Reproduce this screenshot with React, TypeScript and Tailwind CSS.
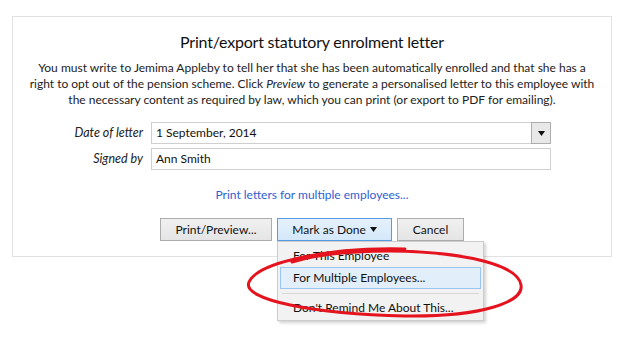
import React from "react";

export default function App() {
  const font = { fontFamily: "Lato, 'Noto Sans', 'Liberation Sans', sans-serif" };
  return (
    <div className="relative w-[628px] h-[344px] bg-white overflow-hidden text-[#1f1f1f]" style={font}>
      <div className="pt-[16px] pl-[12px]">
        <div className="w-[600px] h-[241px] border border-[#e1e1e1] bg-white flex flex-col items-center pt-[14px]">
          <div className="text-[16px] leading-[22px] tracking-[-0.2px] text-[#111]">Print/export statutory enrolment letter</div>
          <p className="mt-[7px] text-[12px] leading-[16px] text-center whitespace-nowrap text-[#222]">
            You must write to Jemima Appleby to tell her that she has been automatically enrolled and that she has a
            <br />
            right to opt out of the pension scheme. Click <i>Preview</i> to generate a personalised letter to this employee with
            <br />
            the necessary content as required by law, which you can print (or export to PDF for emailing).
          </p>
          <div className="mt-[14px] self-start grid grid-cols-[130px_400px] gap-x-[8px] gap-y-[4px] items-center text-[12px]">
            <div className="italic text-right text-[12.5px] text-[#222]">Date of letter</div>
            <div className="h-[22px] border border-[#cfcfcf] bg-white flex items-stretch">
              <div className="flex-1 pl-[4px] leading-[20px] text-[#111]">1 September, 2014</div>
              <div className="w-[20px] -my-[1px] -mr-[1px] border border-[#adadad] bg-[#e8e8e8] flex items-center justify-center">
                <svg width="7" height="5" viewBox="0 0 7 5"><path d="M0 0H7L3.5 5Z" fill="#111" /></svg>
              </div>
            </div>
            <div className="italic text-right text-[12.5px] text-[#222]">Signed by</div>
            <div className="h-[22px] border border-[#cfcfcf] bg-white pl-[4px] leading-[20px] text-[#111]">Ann Smith</div>
          </div>
          <div className="mt-[17px] text-[12px] leading-[16px] text-[#3060d0]">Print letters for multiple employees...</div>
          <div className="mt-[15px] flex gap-[5px] text-[12px]">
            <button className="w-[112px] h-[23px] border border-[#acacac] bg-gradient-to-b from-[#f0f0f0] to-[#e5e5e5] text-[#111]">Print/Preview...</button>
            <div className="relative">
              <button className="w-[115px] h-[23px] border border-[#569de5] bg-gradient-to-b from-[#e5f1fb] to-[#d4e8fa] text-[#111] flex items-center justify-center gap-[4px]">
                Mark as Done
                <svg width="7" height="5" viewBox="0 0 7 5"><path d="M0 0H7L3.5 5Z" fill="#111" /></svg>
              </button>
              <div className="absolute left-0 top-full w-[207px] h-[80px] border border-[#cccccc] bg-[#f2f2f2] shadow-[2px_2px_3px_rgba(0,0,0,0.18)] pt-[3px] px-[2px] text-[12px] text-[#111]">
                <div className="h-[22px] leading-[22px] pl-[13px]">For This Employee</div>
                <div className="h-[22px] leading-[20px] pl-[12px] border border-[#99c5f0] bg-[#e3eefb]">For Multiple Employees...</div>
                <div className="mt-[4px] mb-[3px] mx-[2px] h-px bg-[#d7d7d7]" />
                <div className="h-[22px] leading-[22px] pl-[13px]">Don't Remind Me About This...</div>
              </div>
            </div>
            <button className="w-[67px] h-[23px] border border-[#acacac] bg-gradient-to-b from-[#f0f0f0] to-[#e5e5e5] text-[#111]">Cancel</button>
          </div>
        </div>
      </div>
      <svg className="absolute left-0 top-0 pointer-events-none" width="628" height="344" viewBox="0 0 628 344">
        <path
          d="M405 249 C 330 247, 258 262, 249 282 C 241 300, 315 314, 405 316 C 482 317, 524 302, 521 285 C 518 266, 470 252, 390 251 C 345 251, 315 255, 292 262"
          fill="none"
          stroke="#e5131d"
          strokeWidth="3"
          strokeLinecap="round"
        />
      </svg>
    </div>
  );
}
